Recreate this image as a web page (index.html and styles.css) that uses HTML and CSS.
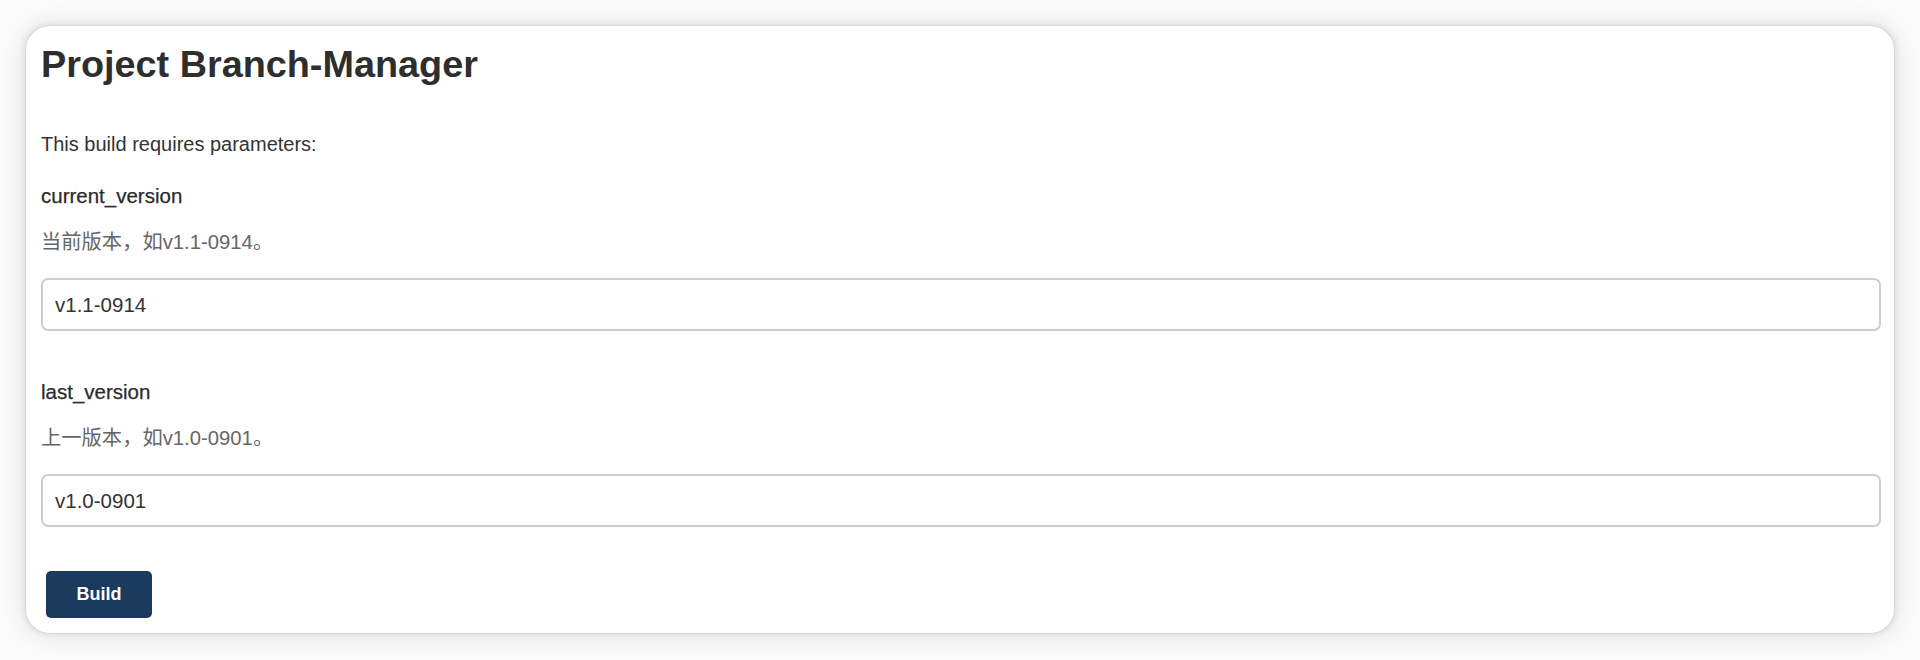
FILE: index.html
```html
<!DOCTYPE html>
<html lang="zh">
<head>
<meta charset="utf-8">
<title>Project Branch-Manager</title>
<link rel="stylesheet" href="styles.css">
</head>
<body>
<main class="card">
  <h1 class="title">Project Branch-Manager</h1>
  <p class="intro">This build requires parameters:</p>
  <form class="params">
    <div class="param">
      <label class="param-name" for="current_version">current_version</label>
      <div class="param-desc">当前版本，如v1.1-0914。</div>
      <input class="param-input" id="current_version" type="text" value="v1.1-0914">
    </div>
    <div class="param param-next">
      <label class="param-name" for="last_version">last_version</label>
      <div class="param-desc">上一版本，如v1.0-0901。</div>
      <input class="param-input" id="last_version" type="text" value="v1.0-0901">
    </div>
    <div class="actions">
      <button class="build-btn" type="button">Build</button>
    </div>
  </form>
</main>
</body>
</html>
```
FILE: styles.css
```css
* {
  box-sizing: border-box;
}

html, body {
  margin: 0;
  background: #fbfbfb;
}

body {
  padding: 26px;
  font-family: "Liberation Sans", Arial, "Noto Sans CJK SC", sans-serif;
  color: #333333;
}

.card {
  background: #ffffff;
  border-radius: 24px;
  padding: 15px 13px 15px 15px;
  box-shadow: 0 0 0 1px rgba(0, 0, 0, 0.06), 0 0 5px 4px rgba(0, 0, 0, 0.06), 0 1px 22px 9px rgba(0, 0, 0, 0.05);
}

.title {
  margin: 0;
  font-size: 37.8px;
  line-height: 46px;
  font-weight: 700;
  color: #2e2e2e;
}

.intro {
  margin: 45px 0 0;
  font-size: 20px;
  line-height: 24px;
  color: #333333;
}

.params {
  display: flex;
  flex-direction: column;
  margin: 28px 0 0;
}

.param {
  display: flex;
  flex-direction: column;
}

.param-next {
  margin-top: 49px;
}

.param-name {
  font-size: 20.5px;
  line-height: 24px;
  color: #2b2b2b;
  -webkit-text-stroke: 0.25px #2b2b2b;
}

.param-desc {
  margin-top: 22px;
  font-size: 20.3px;
  line-height: 24px;
  color: #666666;
}

.param-input {
  margin-top: 24px;
  height: 53px;
  width: 100%;
  padding: 0 12px;
  border: 2px solid #c8cfd6;
  border-radius: 7px;
  background: #ffffff;
  font-family: "Liberation Sans", Arial, sans-serif;
  font-size: 20.5px;
  color: #333333;
  outline: none;
}

.actions {
  display: flex;
  margin-top: 44px;
  padding-left: 5px;
}

.build-btn {
  width: 106px;
  height: 47px;
  border: none;
  border-radius: 5px;
  background: #1a3b5e;
  color: #ffffff;
  font-family: "Liberation Sans", Arial, sans-serif;
  font-size: 18px;
  font-weight: 700;
  cursor: pointer;
}
```
